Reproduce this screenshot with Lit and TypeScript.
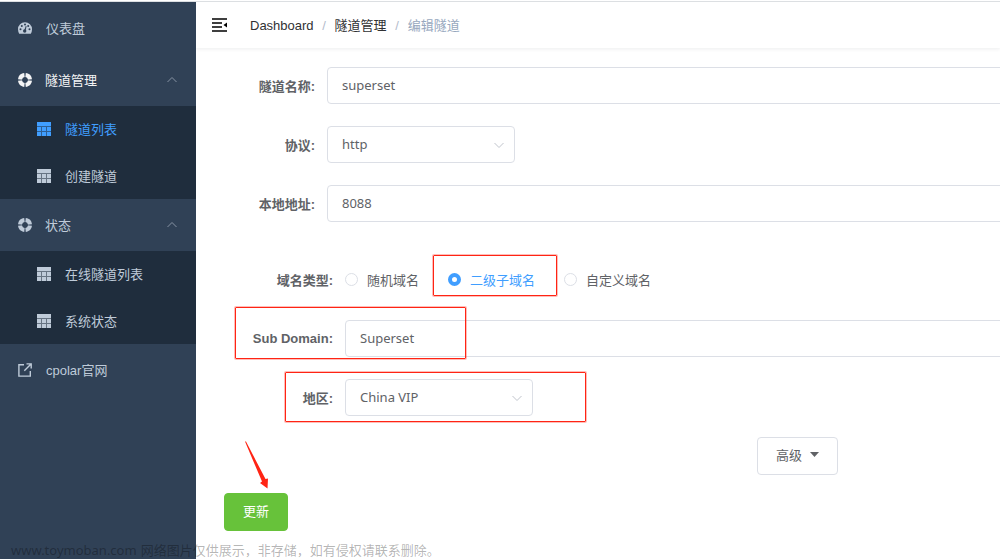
import { LitElement, html, css, svg } from "lit";
import { customElement, state } from "lit/decorators.js";
import { classMap } from "lit/directives/class-map.js";

const icons: Record<string, unknown> = {
  dashboard: svg`
    <path fill="currentColor" d="M7 1.2a7 7 0 0 0-7 7c0 1.700.5 3.200 1.200 4.600h11.600A8.600 8.600 0 0 0 14 8.200a7 7 0 0 0-7-7z"/>
    <g class="cut">
      <circle cx="2.500" cy="8.300" r="1"/><circle cx="3.800" cy="5" r="1"/><circle cx="7" cy="3.600" r="1"/>
      <circle cx="10.200" cy="5" r="1"/><circle cx="11.500" cy="8.300" r="1"/>
      <circle cx="6.700" cy="10" r="1.700"/>
      <path d="M6.200 9.600 7.700 5l.9.300-1.100 4.700z"/>
    </g>`,
  tunnel: svg`
    <g fill="none" stroke="currentColor" stroke-width="4">
      <circle cx="7" cy="7" r="5" opacity=".3"/>
      <path d="M7.800 2.070A5 5 0 0 1 11.930 6.200M11.930 7.800A5 5 0 0 1 7.800 11.930M6.200 11.930A5 5 0 0 1 2.070 7.800M2.070 6.200A5 5 0 0 1 6.200 2.070"/>
    </g>`,
  table: svg`
    <path fill="currentColor" d="M0 0h14v4H0zM0 5h4v4H0zM5 5h4v4H5zM10 5h4v4h-4zM0 10h4v4H0zM5 10h4v4H5zM10 10h4v4h-4z"/>
    <path fill="currentColor" opacity=".45" d="M0 4h14v10H0z"/>`,
  link: svg`
    <path fill="none" stroke="currentColor" stroke-width="1.400" d="M6 1.700H.9v11.400h11.400V8M8.500.9h4.700v4.500M13 1 6.300 7.700"/>`,
};

const icon = (name: string) =>
  html`<svg class="icon" width="14" height="14" viewBox="0 0 14 14" aria-hidden="true">${icons[name]}</svg>`;

const chevron = (up: boolean) => html`
  <svg class="chevron" width="10" height="10" viewBox="0 0 10 10" aria-hidden="true">
    <path fill="none" stroke="currentColor" d=${up ? "M.5 7 5 2.500 9.500 7" : "M.5 3 5 7.500 9.500 3"} />
  </svg>`;

@customElement("side-menu")
class SideMenu extends LitElement {
  static styles = css`
    :host { display: block; background: #304156; color: #bfcbd9; font-size: 13px; }
    .list { list-style: none; margin: 0; padding: 0; }
    .item {
      display: flex; align-items: center; gap: 14px; width: 100%; height: 52px;
      box-sizing: border-box; padding: 0 19px 0 18px; border: 0; background: none;
      color: inherit; font: inherit; text-decoration: none; text-align: left; cursor: pointer;
    }
    .title { gap: 13px; }
    .opened { color: #f4f4f5; }
    .text { flex: 1; padding-bottom: 1px; }
    .icon { flex: none; }
    .cut { fill: #304156; }
    .chevron { color: #8693a3; }
    .sub { display: grid; grid-auto-rows: 1fr; height: 93px; background: #1f2d3d; }
    .sub .item { height: 100%; padding-left: 37px; }
    .active { color: #409eff; }
  `;

  private entry(name: string, label: string, active = false) {
    return html`<li>
      <a class=${classMap({ item: true, active })} href="#">${icon(name)}<span class="text">${label}</span></a>
    </li>`;
  }

  private group(label: string, opened: boolean, children: unknown) {
    return html`<li>
      <button class=${classMap({ item: true, title: true, opened })} type="button" aria-expanded="true">
        ${icon("tunnel")}<span class="text">${label}</span>${chevron(true)}
      </button>
      <ul class="list sub">${children}</ul>
    </li>`;
  }

  render() {
    return html`<nav><ul class="list">
      ${this.entry("dashboard", "仪表盘")}
      ${this.group("隧道管理", true, html`${this.entry("table", "隧道列表", true)}${this.entry("table", "创建隧道")}`)}
      ${this.group("状态", false, html`${this.entry("table", "在线隧道列表")}${this.entry("table", "系统状态")}`)}
      ${this.entry("link", "cpolar官网")}
    </ul></nav>`;
  }
}

@customElement("top-bar")
class TopBar extends LitElement {
  static styles = css`
    :host { display: flex; align-items: center; height: 46px; padding-left: 16px; gap: 23px;
      background: #fff; box-shadow: 0 1px 4px rgba(0, 21, 41, 0.08); font-size: 13px; }
    .toggle { display: flex; padding: 0; border: 0; background: none; color: #000; cursor: pointer; }
    .crumbs { display: flex; align-items: baseline; gap: 8px; list-style: none; margin: 0; padding: 0 0 2px; }
    .crumbs a { color: #303133; text-decoration: none; }
    .slash { width: 5px; text-align: center; color: #b4bccc; }
    .current { color: #97a8be; }
  `;

  render() {
    return html`
      <button class="toggle" type="button" aria-label="Toggle menu">
        <svg width="15" height="14" viewBox="0 0 15 14" aria-hidden="true">
          <path stroke="currentColor" stroke-width="1.300" d="M0 1h15M0 5h10M0 9h10M0 13h15" />
          <path fill="currentColor" d="M15 4.500v5l-3.500-2.500z" />
        </svg>
      </button>
      <ol class="crumbs">
        <li><a href="#">Dashboard</a></li>
        <li class="slash" aria-hidden="true">/</li>
        <li><a href="#">隧道管理</a></li>
        <li class="slash" aria-hidden="true">/</li>
        <li class="current" aria-current="page">编辑隧道</li>
      </ol>`;
  }
}

@customElement("tunnel-form")
class TunnelForm extends LitElement {
  @state() private domainType = "sub";

  static styles = css`
    :host { display: block; font-size: 13px; color: #606266; }
    .form { display: flex; flex-direction: column; gap: 22px; min-width: 1147px; padding: 19px 28px 28px; }
    .row { display: flex; align-items: center; height: 37px; }
    .label { flex: none; width: 103px; box-sizing: border-box; padding: 0 12px 1px 0; text-align: right; font-weight: 700; }
    .nested { display: flex; flex-direction: column; gap: 22px; padding-top: 17px; }
    .nested .label { width: 121px; }
    .field {
      width: 100%; height: 37px; box-sizing: border-box; margin: 0; padding: 0 14px 1px;
      border: 1px solid #dcdfe6; border-radius: 4px; background: #fff; color: #606266;
      font: 13px "Noto Sans", "Noto Sans CJK SC", sans-serif; appearance: none; outline: none;
    }
    .grow { flex: 1; }
    .picker { display: grid; width: 188px; align-items: center; }
    .picker > * { grid-area: 1 / 1; }
    .picker .chevron { justify-self: end; margin-right: 11px; color: #c0c4cc; pointer-events: none; }
    .radios { display: flex; gap: 29px; }
    .radio { display: flex; align-items: center; gap: 9px; cursor: pointer; }
    .radio input { appearance: none; width: 13px; height: 13px; box-sizing: border-box; margin: 0;
      border: 1px solid #dcdfe6; border-radius: 50%; background: #fff; }
    .radio input:checked { border: 4px solid #409eff; }
    .picked { color: #409eff; }
    .more { display: flex; justify-content: center; margin-top: -1px; }
    .button { display: flex; align-items: center; gap: 8px; height: 38px; padding: 0 18px 3px;
      border: 1px solid #dcdfe6; border-radius: 4px; background: #fff; color: #606266; font: inherit; cursor: pointer; }
    .success { border-color: #67c23a; background: #67c23a; color: #fff; }
    .actions { display: flex; margin-top: -4px; }
  `;

  private radio(value: string, label: string) {
    const checked = this.domainType === value;
    return html`<label class=${classMap({ radio: true, picked: checked })}>
      <input type="radio" name="domain" .checked=${checked} @change=${() => (this.domainType = value)} />${label}
    </label>`;
  }

  private input(id: string, label: string, value: string) {
    return html`<div class="row">
      <label class="label" for=${id}>${label}:</label>
      <div class="grow"><input class="field" id=${id} type="text" .value=${value} /></div>
    </div>`;
  }

  private select(id: string, label: string, options: string[]) {
    return html`<div class="row">
      <label class="label" for=${id}>${label}:</label>
      <div class="picker">
        <select class="field" id=${id}>${options.map((o) => html`<option>${o}</option>`)}</select>
        ${chevron(false)}
      </div>
    </div>`;
  }

  render() {
    return html`<form class="form" @submit=${(e: Event) => e.preventDefault()}>
      ${this.input("name", "隧道名称", "superset")}
      ${this.select("protocol", "协议", ["http"])}
      ${this.input("address", "本地地址", "8088")}
      <div class="nested">
        <div class="row" role="radiogroup" aria-labelledby="type">
          <span class="label" id="type">域名类型:</span>
          <div class="radios">
            ${this.radio("random", "随机域名")}${this.radio("sub", "二级子域名")}${this.radio("custom", "自定义域名")}
          </div>
        </div>
        ${this.input("subdomain", "Sub Domain", "Superset")}
        ${this.select("region", "地区", ["China VIP"])}
      </div>
      <div class="more">
        <button class="button" type="button">高级
          <svg width="9" height="5" viewBox="0 0 9 5" aria-hidden="true"><path fill="currentColor" d="M0 0h9L4.500 5z" /></svg>
        </button>
      </div>
      <div class="actions"><button class="button success" type="submit">更新</button></div>
    </form>`;
  }
}

@customElement("app-root")
class AppRoot extends LitElement {
  static styles = css`
    :host { display: block; position: relative; min-height: 100vh; overflow: hidden; background: #fff;
      font-family: "Liberation Sans", "Noto Sans CJK SC", sans-serif; }
    .page { display: grid; grid-template: 1px 1fr / 196px minmax(0, 1fr); min-height: 100vh;
      box-sizing: border-box; padding-top: 1px; }
    .page::before { content: ""; grid-column: 1 / -1; background: #dcdfe2; }
    .main { overflow: hidden; }
    .mark { position: absolute; box-sizing: border-box; border: 1px solid #ff2414; border-radius: 1px;
      box-shadow: 0 0 0 1px rgba(255, 36, 20, 0.3); pointer-events: none; }
    .mark-type { left: 433px; top: 255px; width: 124px; height: 41px; }
    .mark-sub { left: 235px; top: 307px; width: 231px; height: 52px; }
    .mark-region { left: 285px; top: 372px; width: 301px; height: 50px; }
    .arrow { position: absolute; left: 244px; top: 441px; pointer-events: none; }
    .watermark { position: absolute; left: 11px; bottom: 0; margin: 0; white-space: nowrap;
      display: flex; gap: 4px; height: 18px; line-height: 18px; color: rgba(0, 0, 0, 0.3);
      font-family: "Noto Sans", "Noto Sans CJK SC", sans-serif; font-size: 13px; pointer-events: none; }
  `;

  render() {
    return html`
      <div class="page">
        <side-menu></side-menu>
        <main class="main"><top-bar></top-bar><tunnel-form></tunnel-form></main>
      </div>
      <div class="mark mark-type"></div>
      <div class="mark mark-sub"></div>
      <div class="mark mark-region"></div>
      <svg class="arrow" width="26" height="48" viewBox="0 0 26 48" aria-hidden="true">
        <path fill="#ff2414" d="M1 .5 2 .5 21.500 38 24 37.500 23.500 47.500 16 42 18 40.500z" />
      </svg>
      <p class="watermark"><span>www.toymoban.com</span><span>网络图片仅供展示，非存储，如有侵权请联系删除。</span></p>`;
  }
}
